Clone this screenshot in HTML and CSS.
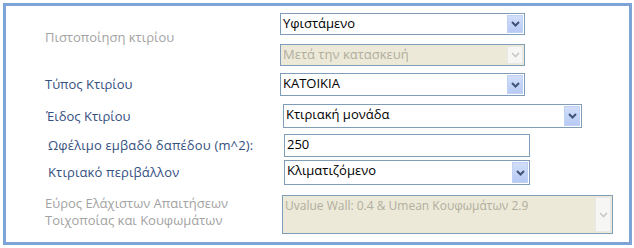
FILE: index.html
```html
<!DOCTYPE html>
<html lang="el">
<head>
<meta charset="utf-8">
<title>Κτίριο</title>
<link rel="stylesheet" href="styles.css">
</head>
<body>
<div class="frame">
  <div class="row row-cert">
    <div class="label muted lbl-cert">Πιστοποίηση κτιρίου</div>
    <div class="stack">
      <div class="combo w245">
        <span class="val">Υφιστάμενο</span>
        <span class="btn"><svg width="9" height="6" viewBox="0 0 9 6"><path d="M1 1 L4.5 4.5 L8 1" fill="none" stroke="#3f5478" stroke-width="2"/></svg></span>
      </div>
      <div class="combo w245 disabled">
        <span class="val">Μετά την κατασκευή</span>
        <span class="btn"><svg width="9" height="6" viewBox="0 0 9 6"><path d="M1 1 L4.5 4.5 L8 1" fill="none" stroke="#c9c9c9" stroke-width="1.6"/></svg></span>
      </div>
    </div>
  </div>
  <div class="row row-type">
    <div class="label">Τύπος Κτιρίου</div>
    <div class="combo w245 h23">
      <span class="val">ΚΑΤΟΙΚΙΑ</span>
      <span class="btn"><svg width="9" height="6" viewBox="0 0 9 6"><path d="M1 1 L4.5 4.5 L8 1" fill="none" stroke="#3f5478" stroke-width="2"/></svg></span>
    </div>
  </div>
  <div class="row row-kind">
    <div class="label lbl-kind">Έιδος Κτιρίου</div>
    <div class="combo w299 h24">
      <span class="val">Κτιριακή μονάδα</span>
      <span class="btn"><svg width="9" height="6" viewBox="0 0 9 6"><path d="M1 1 L4.5 4.5 L8 1" fill="none" stroke="#3f5478" stroke-width="2"/></svg></span>
    </div>
  </div>
  <div class="row row-area">
    <div class="label lbl-in">Ωφέλιμο εμβαδό δαπέδου (m^2):</div>
    <div class="text w246 h23"><span class="val">250</span></div>
  </div>
  <div class="row row-env">
    <div class="label lbl-in">Κτιριακό περιβάλλον</div>
    <div class="combo w246 h25">
      <span class="val">Κλιματιζόμενο</span>
      <span class="btn"><svg width="9" height="6" viewBox="0 0 9 6"><path d="M1 1 L4.5 4.5 L8 1" fill="none" stroke="#3f5478" stroke-width="2"/></svg></span>
    </div>
  </div>
  <div class="row row-range">
    <div class="label muted two">Εύρος Ελάχιστων Απαιτήσεων<br>Τοιχοποίας και Κουφωμάτων</div>
    <div class="combo big disabled">
      <span class="val small">Uvalue Wall: 0.4 &amp; Umean Κουφωμάτων 2.9</span>
      <span class="btn"><svg width="9" height="6" viewBox="0 0 9 6"><path d="M1 1 L4.5 4.5 L8 1" fill="none" stroke="#c9c9c9" stroke-width="1.6"/></svg></span>
    </div>
  </div>
</div>
</body>
</html>
```
FILE: styles.css
```css
html, body {
  margin: 0;
  padding: 0;
  background: #ffffff;
}
body {
  font-family: "Open Sans", "Noto Sans", sans-serif;
  font-size: 13px;
}
.frame {
  box-sizing: border-box;
  margin: 3px 0 0 3px;
  width: 629px;
  height: 242px;
  border: 3px solid #7ea4d6;
  padding: 7px 0 0 0;
  display: flex;
  flex-direction: column;
}
.row {
  display: flex;
  align-items: center;
}
.label {
  color: #34507f;
  width: 235px;
  padding-left: 39px;
  line-height: 17px;
  white-space: nowrap;
}
.muted {
  color: #a3a3a3;
}
.lbl-kind { padding-left: 40px; }
.lbl-in { padding-left: 42px; width: 234px; letter-spacing: 0.15px; }
.lbl-cert { margin-bottom: 4px; }
.stack {
  display: flex;
  flex-direction: column;
  gap: 9px;
}
.combo, .text {
  box-sizing: border-box;
  border: 1px solid #7f9db9;
  background: #fff;
  display: flex;
  align-items: stretch;
  height: 22px;
}
.val {
  flex: 1;
  color: #000;
  padding-left: 2px;
  line-height: 19px;
  white-space: nowrap;
  overflow: hidden;
}
.btn {
  width: 16px;
  margin: 1px 1px 1px 0;
  background: linear-gradient(#d3e0fb, #b5c9f4);
  border: 0;
  box-shadow: inset 0 0 0 1px #c1d1f3;
  display: flex;
  align-items: center;
  justify-content: center;
}
.w245 { width: 245px; }
.w246 { width: 246px; }
.w299 { width: 299px; }
.h23 { height: 23px; }
.h24 { height: 24px; }
.h25 { height: 25px; }
.row-type { margin-top: 7px; }
.row-kind { margin-top: 8px; }
.row-kind .combo { margin-left: 2px; }
.row-area { margin-top: 6px; }
.row-area .text { margin-left: 2px; }
.row-env { margin-top: 3px; }
.row-env .combo { margin-left: 2px; }
.row-range { margin-top: 10px; align-items: flex-start; }
.row-range .combo { margin-left: 2px; }
.two { padding-left: 39px; width: 235px; }
.disabled {
  background: #ece9d8;
}
.disabled .val {
  color: #b1ae9f;
}
.disabled .btn {
  background: #f6f6f4;
  box-shadow: inset 0 0 0 1px #e8e8e4;
}
.big {
  width: 331px;
  height: 39px;
}
.big .val.small {
  font-size: 12px;
  line-height: 17px;
  padding-top: 1px;
}
```
